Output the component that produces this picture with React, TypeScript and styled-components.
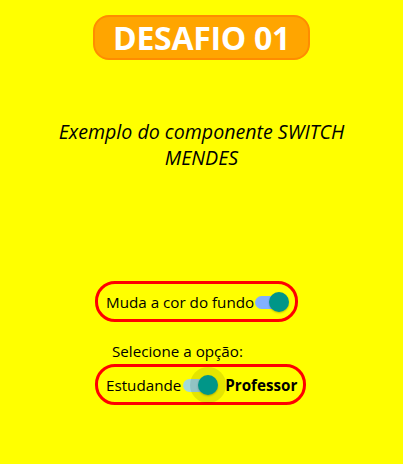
import React from "react";
import styled, { createGlobalStyle } from "styled-components";

const Global = createGlobalStyle`
  html, body { margin: 0; padding: 0; background: #ffff00; }
  body { font-family: "Open Sans", "Noto Sans", sans-serif; color: #000; }
`;

const Page = styled.div`
  min-height: 464px;
  display: flex;
  flex-direction: column;
  align-items: center;
  padding-top: 15px;
  box-sizing: border-box;
`;

const Title = styled.h1`
  margin: 0;
  height: 45px;
  box-sizing: border-box;
  padding: 0 18px;
  display: flex;
  align-items: center;
  background: #ffa500;
  border: 2px solid #ff8c00;
  border-radius: 16px;
  color: #fff;
  font-size: 32px;
  font-weight: 700;
  letter-spacing: -0.3px;
`;

const Subtitle = styled.p`
  margin: 59px 0 0;
  max-width: 330px;
  text-align: center;
  font-style: italic;
  font-size: 19.6px;
  line-height: 26px;
`;

const Controls = styled.div`
  margin-top: 110px;
  width: 213px;
  display: flex;
  flex-direction: column;
  align-items: flex-start;
`;

const Box = styled.div<{ $w: number }>`
  width: ${(p) => p.$w}px;
  height: 41px;
  box-sizing: border-box;
  border: 3px solid #ff0000;
  border-radius: 20px;
  display: flex;
  align-items: center;
  padding-left: 8px;
  font-size: 15.2px;
`;

const Label = styled.div`
  margin: 18px 0 2px 17px;
  font-size: 15.2px;
  line-height: 22px;
`;

const Bold = styled.span`
  font-weight: 700;
  margin-left: 7px;
`;

const SwitchWrap = styled.span<{ $w: number; $ml: number }>`
  position: relative;
  display: inline-block;
  width: ${(p) => p.$w}px;
  height: 20px;
  margin-left: ${(p) => p.$ml}px;
  flex: none;
`;

const Track = styled.span<{ $w: number; $c: string }>`
  position: absolute;
  left: 0;
  top: 4px;
  width: ${(p) => p.$w}px;
  height: 13px;
  border-radius: 7px;
  background: ${(p) => p.$c};
`;

const Halo = styled.span<{ $l: number }>`
  position: absolute;
  left: ${(p) => p.$l - 8}px;
  top: -8px;
  width: 36px;
  height: 36px;
  border-radius: 50%;
  background: rgba(0, 0, 0, 0.1);
`;

const Thumb = styled.span<{ $l: number }>`
  position: absolute;
  left: ${(p) => p.$l}px;
  top: 0;
  width: 20px;
  height: 20px;
  border-radius: 50%;
  background: #009688;
  box-shadow: 0 1px 2px rgba(0, 0, 0, 0.25);
`;

function Switch({ trackW, thumbL, color, halo, ml }: { trackW: number; thumbL: number; color: string; halo?: boolean; ml: number }) {
  return (
    <SwitchWrap $w={thumbL + 20} $ml={ml}>
      <Track $w={trackW} $c={color} />
      {halo && <Halo $l={thumbL} />}
      <Thumb $l={thumbL} />
    </SwitchWrap>
  );
}

export default function App() {
  return (
    <>
      <Global />
      <Page>
        <Title>DESAFIO 01</Title>
        <Subtitle>Exemplo do componente SWITCH MENDES</Subtitle>
        <Controls>
          <Box $w={203}>
            Muda a cor do fundo
            <Switch trackW={27} thumbL={14} color="#82b1ff" ml={1} />
          </Box>
          <Label>Selecione a opção:</Label>
          <Box $w={211}>
            Estudande
            <Switch trackW={30} thumbL={15} color="#a3dada" halo ml={2} />
            <Bold>Professor</Bold>
          </Box>
        </Controls>
      </Page>
    </>
  );
}
